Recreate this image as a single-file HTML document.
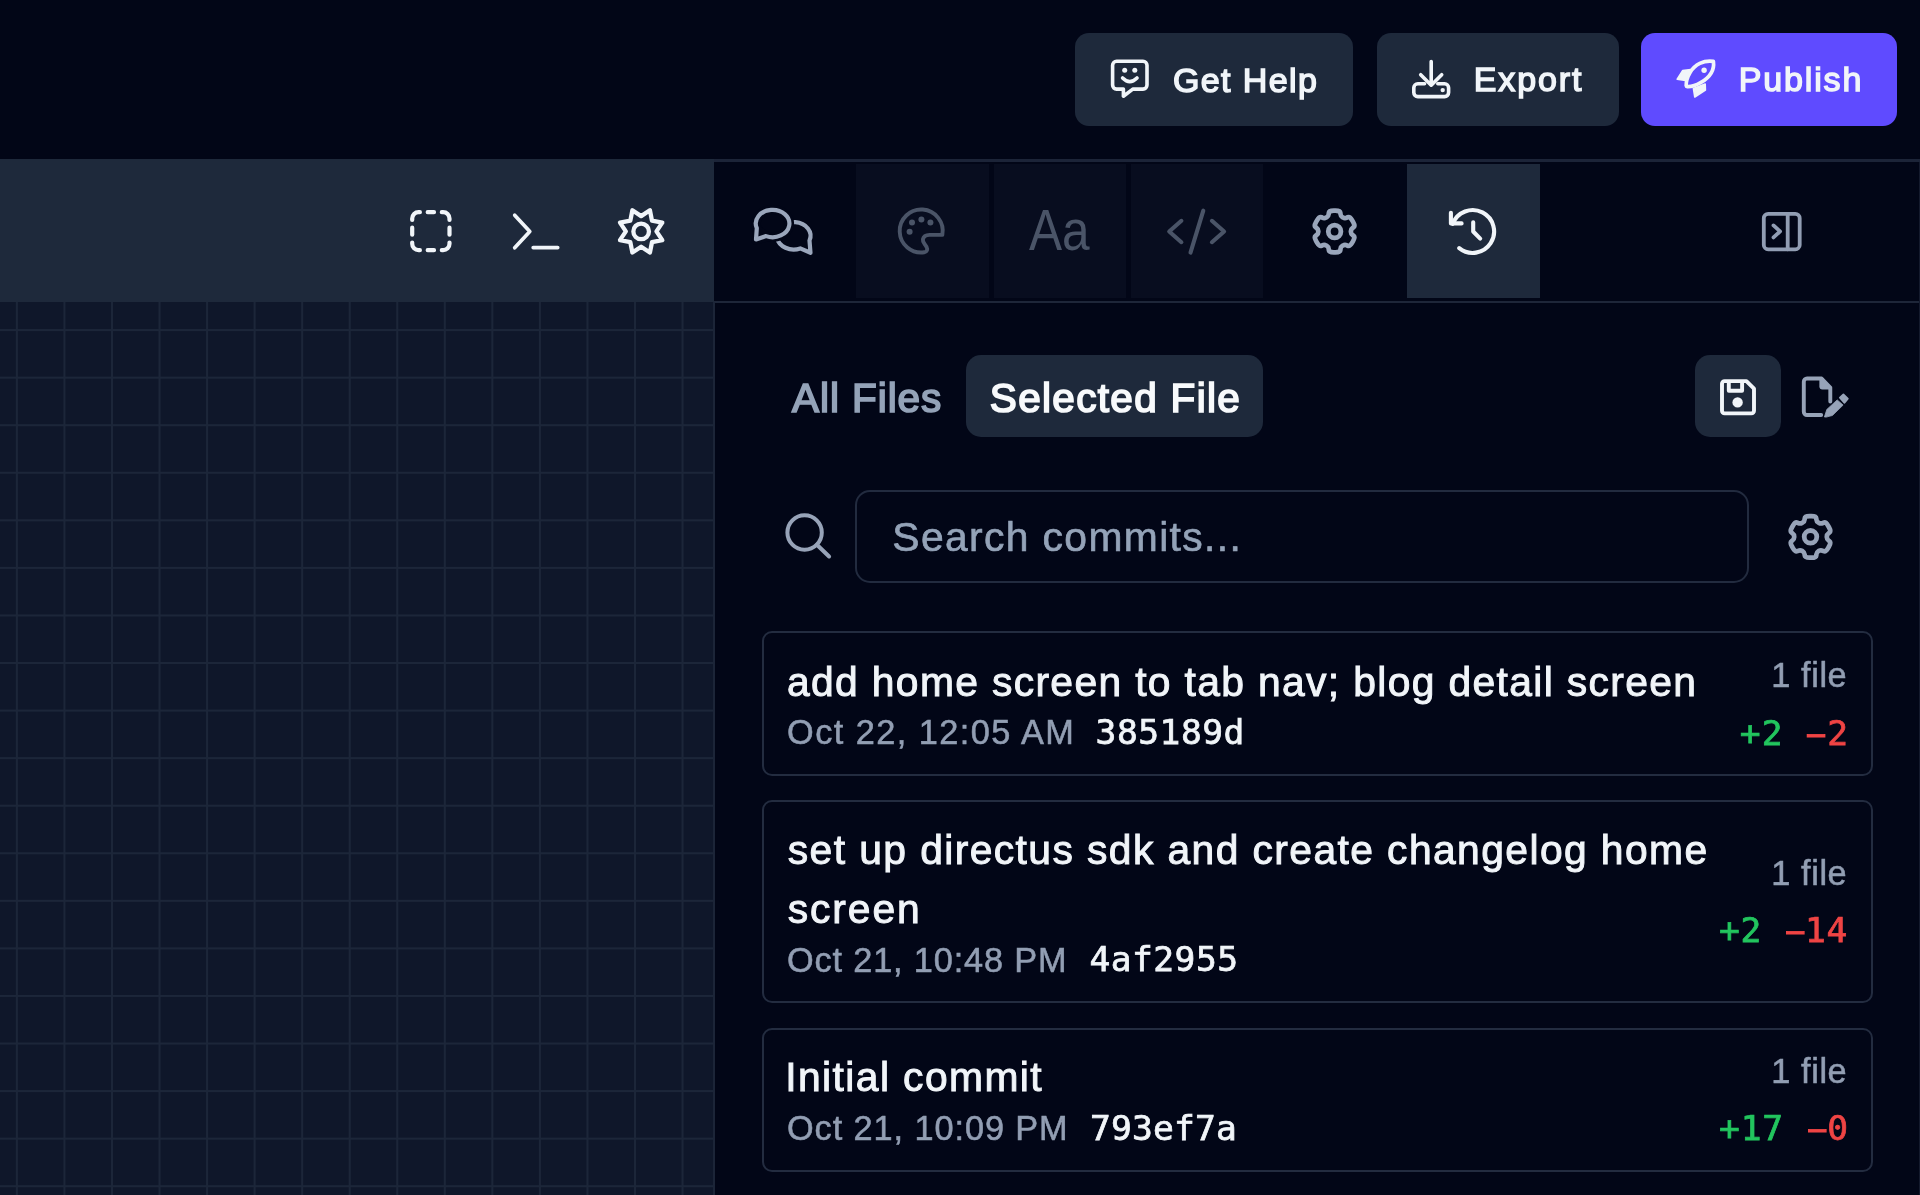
<!DOCTYPE html>
<html lang="en">
<head>
<meta charset="utf-8">
<title>Version history</title>
<style>
  html, body { margin: 0; padding: 0; background: #020617; }
  body {
    width: 1920px; height: 1195px; overflow: hidden; position: relative;
    background: #020617;
    font-family: "Liberation Sans", sans-serif;
    color: #f1f5f9;
    -webkit-font-smoothing: antialiased;
  }
  #app { position: absolute; left: 0; top: 0; width: 1920px; height: 1195px; overflow: hidden; background: #020617; will-change: transform; }
  button { border: 0; padding: 0; margin: 0; font: inherit; color: inherit; background: none; display: block; text-align: left; }
  ul, li { list-style: none; margin: 0; padding: 0; }
  .t { position: absolute; white-space: nowrap; line-height: 1; }
  svg { position: absolute; overflow: visible; }

  /* ---------- top bar ---------- */
  .topbtn { position: absolute; top: 33px; height: 93px; border-radius: 14px; background: #1e293b; }
  .topbtn.primary { background: #5f4bff; }

  .topbtn .t { font-weight: 400; font-size: 34px; color: #f1f5f9; -webkit-text-stroke: 1.45px #f1f5f9; }
  .seg { font-size: 40.5px; color: #f8fafc; -webkit-text-stroke: 1.7px #f8fafc; }
  #aa { font-size: 57px; color: #4a5467; transform: scaleX(0.87); transform-origin: 0 0; }
  #searchph { font-size: 40.8px; color: #94a3b8; -webkit-text-stroke: 0.65px #94a3b8; }

  /* ---------- left canvas ---------- */
  #canvas {
    position: absolute; left: 0; top: 302px; width: 713px; height: 893px;
    background-color: #0f172a;
    background-image:
      linear-gradient(to right, #1c2639 0, #1c2639 2.4px, transparent 2.4px),
      linear-gradient(to bottom, #1c2639 0, #1c2639 2.4px, transparent 2.4px);
    background-size: 47.56px 47.57px;
    background-position: 15.9px 27.1px;
  }
  #ltoolbar { position: absolute; left: 0; top: 159.2px; width: 714px; height: 143.2px; background: #1e293b; }

  /* ---------- right panel ---------- */
  #rpanel-left { position: absolute; left: 712.5px; top: 302px; width: 2px; height: 893px; background: #1c2538; }
  #tabs-top { position: absolute; left: 714px; top: 159.1px; width: 1206px; height: 2.5px; background: #1c2438; }
  #tabs-bot { position: absolute; left: 714px; top: 300.6px; width: 1206px; height: 2px; background: #1e2639; }
  button.tab { position: absolute; top: 164px; height: 133.6px; width: 132.6px; }
  button.tab.dis { background: #080d1f; }
  button.tab.on { background: #1e293b; }

  button.chip { position: absolute; background: #1e293b; border-radius: 15px; }
  #search { position: absolute; left: 855px; top: 490px; width: 894px; height: 92.5px; box-sizing: border-box;
            border: 2.3px solid #222b3f; border-radius: 15px; }

  .card { position: absolute; left: 762px; width: 1110.6px; box-sizing: border-box; border: 2.2px solid #232c40; border-radius: 10px; }
  .title { font-size: 40.8px; color: #f1f5f9; -webkit-text-stroke: 0.95px #f1f5f9; }
  .date { font-size: 34.3px; color: #929eb3; -webkit-text-stroke: 0.55px #929eb3; }
  .hash { font-family: "DejaVu Sans Mono", "Liberation Mono", monospace; font-size: 34.6px; color: #f1f5f9; -webkit-text-stroke: 0.75px #f1f5f9; }
  .files { font-size: 34.3px; color: #929eb3; -webkit-text-stroke: 0.55px #929eb3; }
  .diff { font-family: "DejaVu Sans Mono", "Liberation Mono", monospace; font-size: 34.6px; }
  .add { color: #22c55e; -webkit-text-stroke: 0.75px #22c55e; } .del { color: #ef4444; -webkit-text-stroke: 0.75px #ef4444; }
  #redge { position: absolute; left: 1919px; top: 162px; width: 1px; height: 1033px; background: #141a2d; }
  .mn { display: inline-block; transform: scaleX(1.95); transform-origin: 44% 50%; }
</style>
</head>
<body>
<div id="app">

<!-- ================= TOP BAR ================= -->
<header id="topbar">
  <button type="button" class="topbtn" style="left:1075px;width:278px;" aria-label="Get Help">
    <span class="t" id="gethelp" style="left:97.96px;top:29.6px;letter-spacing:1.38px;">Get Help</span>
  </button>
  <button type="button" class="topbtn" style="left:1376.7px;width:242px;" aria-label="Export">
    <span class="t" id="export" style="left:97px;top:29.2px;letter-spacing:1.92px;">Export</span>
  </button>
  <button type="button" class="topbtn primary" style="left:1641px;width:255.6px;" aria-label="Publish">
    <span class="t" id="publish" style="left:97.76px;top:29.2px;letter-spacing:1.84px;">Publish</span>
  </button>
</header>

<!-- ================= LEFT: CANVAS ================= -->
<section id="workspace">
  <div id="ltoolbar"></div>
  <div id="canvas"></div>
</section>

<!-- ================= RIGHT PANEL ================= -->
<aside id="panel">
  <div id="tabs-top"></div>
  <div id="tabs-bot"></div>
  <div id="rpanel-left"></div>
  <div id="redge"></div>

  <nav id="tabs">
    <button type="button" class="tab"     style="left:719px;" aria-label="Chat"></button>
    <button type="button" class="tab dis" style="left:856px;" aria-label="Theme" disabled></button>
    <button type="button" class="tab dis" style="left:993.6px;" aria-label="Typography" disabled><span class="t" id="aa" style="left:35.6px;top:37.6px;">Aa</span></button>
    <button type="button" class="tab dis" style="left:1130.8px;" aria-label="Code" disabled></button>
    <button type="button" class="tab"     style="left:1268.5px;" aria-label="Settings"></button>
    <button type="button" class="tab on"  style="left:1407px;" aria-label="History"></button>
  </nav>

  <!-- filter row -->
  <div id="filters">
    <span class="t seg" id="allfiles" style="left:792.12px;top:377.7px;letter-spacing:0.92px;color:#94a3b8;-webkit-text-stroke-color:#94a3b8;">All Files</span>
    <button type="button" class="chip" style="left:966px;top:355.4px;width:297.3px;height:81.3px;" aria-label="Selected File"></button>
    <span class="t seg" id="selfile" style="left:989.84px;top:377.7px;letter-spacing:1.32px;">Selected File</span>
    <button type="button" class="chip" style="left:1695px;top:355px;width:86px;height:82px;" aria-label="Save"></button>
  </div>

  <!-- search -->
  <div id="search"></div>
  <span class="t" id="searchph" style="left:892.32px;top:517.1px;letter-spacing:1.38px;">Search commits...</span>

  <!-- commits -->
  <ul id="commits">
    <li>
      <div class="card" style="top:631.4px;height:144.3px;"></div>
      <span class="t title" id="t1" style="left:787px;top:661.6px;letter-spacing:1.35px;">add home screen to tab nav; blog detail screen</span>
      <span class="t date"  id="d1" style="left:787px;top:714.5px;letter-spacing:1.46px;">Oct 22, 12:05 AM</span>
      <span class="t hash"  id="h1" style="left:1095.6px;top:714.9px;letter-spacing:0.52px;">385189d</span>
      <span class="t files" id="f1" style="left:1771.24px;top:657.6px;letter-spacing:0.6px;">1 file</span>
      <span class="t diff"  id="x1" style="left:1739.84px;top:715.8px;letter-spacing:1.02px;"><span class="add">+2</span> <span class="del"><span class="mn">-</span>2</span></span>
    </li>
    <li>
      <div class="card" style="top:800.3px;height:202.8px;"></div>
      <span class="t title" id="t2a" style="left:787.8px;top:829.6px;letter-spacing:1.41px;">set up directus sdk and create changelog home</span>
      <span class="t title" id="t2b" style="left:787.8px;top:888.6px;letter-spacing:1.88px;">screen</span>
      <span class="t date"  id="d2" style="left:787px;top:942.6px;letter-spacing:0.84px;">Oct 21, 10:48 PM</span>
      <span class="t hash"  id="h2" style="left:1089.44px;top:941.9px;letter-spacing:0.47px;">4af2955</span>
      <span class="t files" id="f2" style="left:1771.24px;top:855.8px;letter-spacing:0.6px;">1 file</span>
      <span class="t diff"  id="x2" style="left:1719.04px;top:912.8px;letter-spacing:0.68px;"><span class="add">+2</span> <span class="del"><span class="mn">-</span>14</span></span>
    </li>
    <li>
      <div class="card" style="top:1027.6px;height:144.1px;"></div>
      <span class="t title" id="t3" style="left:785.2px;top:1056.6px;letter-spacing:1.42px;">Initial commit</span>
      <span class="t date"  id="d3" style="left:787px;top:1111.2px;letter-spacing:0.92px;">Oct 21, 10:09 PM</span>
      <span class="t hash"  id="h3" style="left:1089.96px;top:1110.7px;letter-spacing:0.2px;">793ef7a</span>
      <span class="t files" id="f3" style="left:1771.24px;top:1053.8px;letter-spacing:0.6px;">1 file</span>
      <span class="t diff"  id="x3" style="left:1719.04px;top:1111.3px;letter-spacing:0.84px;"><span class="add">+17</span> <span class="del"><span class="mn">-</span>0</span></span>
    </li>
  </ul>
</aside>

<svg id="icons" width="1920" height="1195" viewBox="0 0 1920 1195" style="left:0;top:0;pointer-events:none">
<path d="M412.2,219.9 V218.6 A6.4,6.4 0 0 1 418.6,212.2 H419.9 M441.8,212.2 H443.1 A6.4,6.4 0 0 1 449.5,218.6 V219.9 M449.5,242.5 V243.8 A6.4,6.4 0 0 1 443.1,250.2 H441.8 M419.9,250.2 H418.6 A6.4,6.4 0 0 1 412.2,243.8 V242.5 M427.7,212.2 H434 M427.7,250.2 H434 M412.2,227.7 V234.7 M449.5,227.7 V234.7" stroke="#f1f5f9" stroke-width="4.2" fill="none" stroke-linecap="round" stroke-linejoin="round"/>
<path d="M514.7,215.2 L529.8,231.5 L514.7,247.8 M533.2,247.6 H557.7" stroke="#f1f5f9" stroke-width="3.7" fill="none" stroke-linecap="round" stroke-linejoin="round"/>
<path d="M649.91,210.24 L651.97,220.58 L662.31,222.64 L656.45,231.4 L662.31,240.16 L651.97,242.22 L649.91,252.56 L641.15,246.7 L632.39,252.56 L630.33,242.22 L619.99,240.16 L625.85,231.4 L619.99,222.64 L630.33,220.58 L632.39,210.24 L641.15,216.1 Z" stroke="#f1f5f9" stroke-width="4.3" fill="none" stroke-linejoin="round"/>
<circle cx="641.15" cy="231.4" r="7.8" stroke="#f1f5f9" stroke-width="4.3" fill="none"/>
<path d="M800.26,248.41 A16.8,13.7 0 1 1 809.49,240.49 L810.5,252.8 Z" stroke="#9aa6bb" stroke-width="4.2" fill="none" stroke-linejoin="round"/>
<ellipse cx="772.6" cy="223.5" rx="16.8" ry="13.7" stroke="#020617" stroke-width="9.4" fill="#020617"/>
<path d="M768,237 L755.6,240 L758,230.4 Z" stroke="#020617" stroke-width="9" fill="#020617" stroke-linejoin="round"/>
<path d="M766.04,236.11 A16.8,13.7 0 1 0 756.81,228.19 L756,239.5 Z" stroke="#9aa6bb" stroke-width="4.2" fill="none" stroke-linejoin="round"/>
<path d="M942.35,234.88 A21.5,21.5 0 1 0 924.19,252.29 C927.2,251.8 927.8,249.4 926.6,247 C924.8,243.6 922.4,242.2 922.9,239.4 C923.5,236.2 926.2,234.9 929.6,234.9 L942.35,234.88 Z" stroke="#4a5467" stroke-width="3.9" fill="none" stroke-linejoin="round"/>
<circle cx="912.0" cy="222.6" r="3" fill="#4a5467"/>
<circle cx="921.4" cy="219.6" r="3" fill="#4a5467"/>
<circle cx="930.4" cy="222.6" r="3" fill="#4a5467"/>
<circle cx="909.6" cy="231.8" r="3" fill="#4a5467"/>
<path d="M1181.4,220.8 L1169.2,231.5 L1181.4,242.2 M1203.3,210.6 L1190.5,252.6 M1211.9,220.8 L1224.1,231.5 L1211.9,242.2" stroke="#4a5467" stroke-width="4.1" fill="none" stroke-linecap="round" stroke-linejoin="round"/>
<path d="M1342.42,245.83 Q1340.65,246.85 1340.45,249.15 L1340.37,250.02 Q1340.18,252.32 1335.49,252.32 L1333.71,252.32 Q1329.02,252.32 1328.83,250.02 L1328.75,249.15 Q1328.55,246.85 1326.78,245.83 L1326.1,245.44 Q1324.33,244.41 1322.24,245.39 L1321.45,245.76 Q1319.36,246.74 1317.02,242.68 L1316.13,241.14 Q1313.78,237.08 1315.67,235.76 L1316.39,235.26 Q1318.28,233.94 1318.28,231.89 L1318.28,231.11 Q1318.28,229.06 1316.39,227.74 L1315.67,227.24 Q1313.78,225.92 1316.13,221.86 L1317.02,220.32 Q1319.36,216.26 1321.45,217.24 L1322.24,217.61 Q1324.33,218.59 1326.1,217.56 L1326.78,217.17 Q1328.55,216.15 1328.75,213.85 L1328.83,212.98 Q1329.02,210.68 1333.71,210.68 L1335.49,210.68 Q1340.18,210.68 1340.37,212.98 L1340.45,213.85 Q1340.65,216.15 1342.42,217.17 L1343.1,217.56 Q1344.87,218.59 1346.96,217.61 L1347.75,217.24 Q1349.84,216.26 1352.18,220.32 L1353.07,221.86 Q1355.42,225.92 1353.53,227.24 L1352.81,227.74 Q1350.92,229.06 1350.92,231.11 L1350.92,231.89 Q1350.92,233.94 1352.81,235.26 L1353.53,235.76 Q1355.42,237.08 1353.07,241.14 L1352.18,242.68 Q1349.84,246.74 1347.75,245.76 L1346.96,245.39 Q1344.87,244.41 1343.1,245.44 Z" stroke="#9aa6bb" stroke-width="4.7" fill="none" stroke-linejoin="round"/>
<circle cx="1334.6" cy="231.5" r="6.3" stroke="#9aa6bb" stroke-width="4.8" fill="none"/>
<path d="M1452.72,223.83 A21.4,21.4 0 1 1 1459.23,248.13" stroke="#f1f5f9" stroke-width="4.1" fill="none" stroke-linecap="round"/>
<path d="M1450.9,212.7 V223.4 H1461.6" stroke="#f1f5f9" stroke-width="4.1" fill="none" stroke-linecap="round" stroke-linejoin="round"/>
<path d="M1473.2,222.3 V231.5 L1480.2,238.6" stroke="#f1f5f9" stroke-width="4.1" fill="none" stroke-linecap="round" stroke-linejoin="round"/>
<rect x="1763.8" y="213.8" width="35.9" height="35.5" rx="4.4" stroke="#919db3" stroke-width="3.8" fill="none"/>
<path d="M1787.7,213.8 V249.3 M1773.5,225.4 L1780.1,231.4 L1773.5,237.4" stroke="#919db3" stroke-width="3.8" fill="none" stroke-linecap="round" stroke-linejoin="round"/>
<path d="M1724.6,381.1 H1746.4 L1754,388.7 V410.8 A2.6,2.6 0 0 1 1751.4,413.4 H1724.6 A2.6,2.6 0 0 1 1722,410.8 V383.7 A2.6,2.6 0 0 1 1724.6,381.1 Z M1728.8,381.1 V390.8 H1742.1 V381.1" stroke="#f1f5f9" stroke-width="3.9" fill="none" stroke-linejoin="round"/>
<circle cx="1737.6" cy="402.4" r="5.2" fill="#f1f5f9"/>
<path d="M1821.2,415 H1807 A3.2,3.2 0 0 1 1803.8,411.8 V381.7 A3.2,3.2 0 0 1 1807,378.5 H1821.6 L1830.3,387.6 V401.6" stroke="#97a3b8" stroke-width="3.9" fill="none" stroke-linecap="round" stroke-linejoin="round"/>
<path d="M1819.4,378.6 H1822 L1831,388 V389.6 H1822.4 A3,3 0 0 1 1819.4,386.6 Z" fill="#97a3b8"/>
<path d="M1824.4,417 L1826.8,409.5 L1837.2,399.9 L1843.1,405.1 L1832.4,415.5 L1826.2,417.1 Z" fill="#97a3b8" stroke="#97a3b8" stroke-width="0.8" stroke-linejoin="round"/>
<path d="M1839.9,397.6 L1843.4,394.5 L1847.8,398.6 L1844.5,402.8 Z" fill="#97a3b8" stroke="#97a3b8" stroke-width="1.8" stroke-linejoin="round"/>
<circle cx="804.6" cy="532.5" r="17.2" stroke="#97a3b8" stroke-width="4" fill="none"/>
<path d="M816.9,544.8 L829.1,556.5" stroke="#97a3b8" stroke-width="4" fill="none" stroke-linecap="round"/>
<path d="M1818.32,551.23 Q1816.55,552.25 1816.35,554.55 L1816.27,555.42 Q1816.08,557.72 1811.39,557.72 L1809.61,557.72 Q1804.92,557.72 1804.73,555.42 L1804.65,554.55 Q1804.45,552.25 1802.68,551.23 L1802,550.84 Q1800.23,549.81 1798.14,550.79 L1797.35,551.16 Q1795.26,552.14 1792.92,548.08 L1792.03,546.54 Q1789.68,542.48 1791.57,541.16 L1792.29,540.66 Q1794.18,539.34 1794.18,537.29 L1794.18,536.51 Q1794.18,534.46 1792.29,533.14 L1791.57,532.64 Q1789.68,531.32 1792.03,527.26 L1792.92,525.72 Q1795.26,521.66 1797.35,522.64 L1798.14,523.01 Q1800.23,523.99 1802,522.96 L1802.68,522.57 Q1804.45,521.55 1804.65,519.25 L1804.73,518.38 Q1804.92,516.08 1809.61,516.08 L1811.39,516.08 Q1816.08,516.08 1816.27,518.38 L1816.35,519.25 Q1816.55,521.55 1818.32,522.57 L1819,522.96 Q1820.77,523.99 1822.86,523.01 L1823.65,522.64 Q1825.74,521.66 1828.08,525.72 L1828.97,527.26 Q1831.32,531.32 1829.43,532.64 L1828.71,533.14 Q1826.82,534.46 1826.82,536.51 L1826.82,537.29 Q1826.82,539.34 1828.71,540.66 L1829.43,541.16 Q1831.32,542.48 1828.97,546.54 L1828.08,548.08 Q1825.74,552.14 1823.65,551.16 L1822.86,550.79 Q1820.77,549.81 1819,550.84 Z" stroke="#97a3b8" stroke-width="4.7" fill="none" stroke-linejoin="round"/>
<circle cx="1810.5" cy="536.8" r="6.3" stroke="#97a3b8" stroke-width="4.8" fill="none"/>
<path d="M1116.6,61.3 H1143 A4,4 0 0 1 1147,65.3 V85.1 A4,4 0 0 1 1143,89.1 H1132.8 L1123.4,96.2 V89.1 H1116.6 A4,4 0 0 1 1112.6,85.1 V65.3 A4,4 0 0 1 1116.6,61.3 Z" stroke="#f1f5f9" stroke-width="3.6" fill="none" stroke-linejoin="round"/>
<circle cx="1124.7" cy="70.3" r="2.5" fill="#f1f5f9"/><circle cx="1134.8" cy="70.3" r="2.5" fill="#f1f5f9"/>
<path d="M1122.6,78 Q1129.8,85.2 1137,78" stroke="#f1f5f9" stroke-width="3.7" fill="none" stroke-linecap="round"/>
<path d="M1431.2,61.5 V84.6 M1420.7,74.7 L1431.2,85.2 L1441.7,74.7" stroke="#f1f5f9" stroke-width="3.6" fill="none" stroke-linecap="round" stroke-linejoin="round"/>
<path d="M1424.6,83.8 H1417.8 A4,4 0 0 0 1413.8,87.8 V92.6 A4,4 0 0 0 1417.8,96.6 H1444.6 A4,4 0 0 0 1448.6,92.6 V87.8 A4,4 0 0 0 1444.6,83.8 H1437.8" stroke="#f1f5f9" stroke-width="3.6" fill="none" stroke-linecap="round" stroke-linejoin="round"/>
<circle cx="1442.7" cy="90.1" r="2.2" fill="#f1f5f9"/>
<path d="M1713.4,61.4 C1703.5,60 1694.8,64.6 1690.2,72.4 C1687.6,76.8 1686,81.6 1686.2,85.6 Q1686.3,86.6 1687.3,86.7 C1691.4,86.9 1696.2,85.3 1700.6,82.7 C1708.4,78.1 1714.8,71.3 1713.4,61.4 Z" stroke="#f1f5f9" stroke-width="3.7" fill="none" stroke-linejoin="round"/>
<circle cx="1704.1" cy="70.3" r="2.7" fill="#f1f5f9"/>
<path d="M1690.8,69.6 L1682.6,70.6 L1677.2,79.2 L1685.6,80.4 Z" fill="#f1f5f9" stroke="#f1f5f9" stroke-width="1.6" stroke-linejoin="round"/>
<path d="M1705.2,84 L1705.4,90 L1694.8,97 L1693.4,88.4 Z" fill="#f1f5f9" stroke="#f1f5f9" stroke-width="1.6" stroke-linejoin="round"/>
</svg>
</div>
</body>
</html>
